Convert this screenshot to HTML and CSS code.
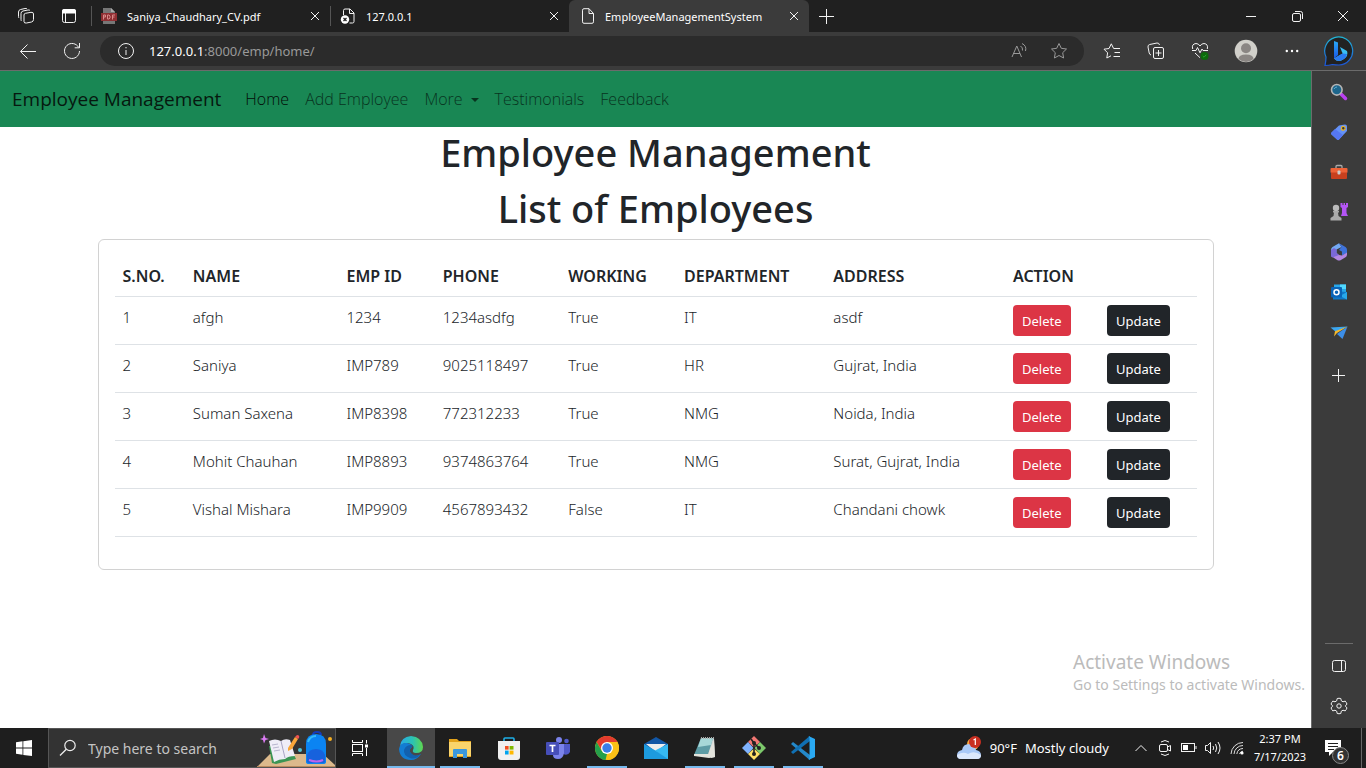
FILE: index.html
```html
<!DOCTYPE html>
<html lang="en">
<head>
<meta charset="utf-8">
<meta name="viewport" content="width=device-width, initial-scale=1">
<title>EmployeeManagementSystem</title>
<link rel="stylesheet" href="styles.css">
</head>
<body>
<div class="screen">

<header class="tabstrip">
  <button class="strip-btn" aria-label="Workspaces"><svg width="18" height="18" viewBox="0 0 18 18" class="line"><path d="M8.500 6.300L14 5.300Q16.500 5 16.500 7V12.500Q16.500 14.500 14.500 15L9.500 16Q7 16.500 7 14.500V8Q7 6.500 8.500 6.300ZM4.500 14Q4 13.500 4 12.500V6.500Q4 4.500 6 4L11 3Q12.500 2.800 13 3.500M2 11Q1.500 10.500 1.500 9.500V5Q1.500 3 3.500 2.500L8 1.500Q9.500 1.200 10 1.800"/></svg></button>
  <button class="strip-btn" aria-label="Tab actions"><svg width="16" height="16" viewBox="0 0 16 16"><rect x="1.500" y="1.500" width="13" height="13" rx="2" class="line"/><path d="M1 5.500V3Q1 1 3 1H13Q15 1 15 3V5.500Z" fill="#fff"/><path d="M4.500 5V14" class="line"/></svg></button>
  <div class="tab">
    <svg width="16" height="16" viewBox="0 0 16 16"><path d="M2 0H10L14 4V16H2Z" fill="#777"/><path d="M10 0V4H14Z" fill="#aaa"/><rect x="0" y="5" width="16" height="8" fill="#8f2f33"/><path d="M2.500 11.500V7H4.500V9H2.500M6.500 7V11H8L9 10V8L8 7ZM11.500 11.500V7H14M11.500 9H13.500" fill="none" stroke="#d98a8a"/></svg>
    <span class="tab-title">Saniya_Chaudhary_CV.pdf</span>
    <button class="close" aria-label="Close tab"><svg width="10" height="10" viewBox="0 0 10 10" class="line"><path d="M1 1L9 9M9 1L1 9"/></svg></button>
  </div>
  <div class="tab">
    <svg width="16" height="16" viewBox="0 0 16 16"><path d="M3.500 7V2.500Q3.500 1 5 1H10L14 5V13.500Q14 15 12.500 15H9.500M9.500 1V5.500H14" class="line"/><circle cx="5" cy="11.500" r="4.200" fill="#fff"/><path d="M3.500 10L6.500 13M6.500 10L3.500 13" stroke="#202020" stroke-width="1.200"/></svg>
    <span class="tab-title">127.0.0.1</span>
    <button class="close" aria-label="Close tab"><svg width="10" height="10" viewBox="0 0 10 10" class="line"><path d="M1 1L9 9M9 1L1 9"/></svg></button>
  </div>
  <div class="tab tab-active">
    <svg width="14" height="16" viewBox="0 0 14 16" class="line"><path d="M8 .700H3Q1.500 .700 1.500 2.200V13.800Q1.500 15.300 3 15.300H11Q12.500 15.300 12.500 13.800V5.500ZM8 .700V5.500H12.500"/></svg>
    <span class="tab-title">EmployeeManagementSystem</span>
    <button class="close" aria-label="Close tab"><svg width="10" height="10" viewBox="0 0 10 10" class="line"><path d="M1 1L9 9M9 1L1 9"/></svg></button>
  </div>
  <button class="new-tab" aria-label="New tab"><svg width="15" height="15" viewBox="0 0 15 15" class="line"><path d="M7.500 0V15M0 7.500H15"/></svg></button>
  <div class="window-controls">
    <button aria-label="Minimize"><svg width="10" height="10" viewBox="0 0 10 10" class="line"><path d="M0 5.500H10"/></svg></button>
    <button aria-label="Restore"><svg width="11" height="11" viewBox="0 0 11 11" class="line"><rect x=".500" y="2.500" width="8" height="8" rx="1.500"/><path d="M3 .500H8.500Q10.500 .500 10.500 2.500V8"/></svg></button>
    <button aria-label="Close window"><svg width="10" height="10" viewBox="0 0 10 10" class="line"><path d="M0 0L10 10M10 0L0 10"/></svg></button>
  </div>
</header>

<div class="toolbar">
  <button class="tool" aria-label="Back"><svg width="18" height="16" viewBox="0 0 18 16" class="line"><path d="M17 8.500H1.500M8.500 1.500L1.500 8.500L8.500 15.500"/></svg></button>
  <button class="tool" aria-label="Refresh"><svg width="18" height="18" viewBox="0 0 18 18" class="line"><path d="M16.500 9A7.500 7.500 0 1 1 14.800 4.200L16 5.500M16.500 1V5.800H11.700"/></svg></button>
  <div class="address">
    <svg width="18" height="18" viewBox="0 0 18 18" class="line"><circle cx="9" cy="9" r="7.500"/><path d="M9 8V13M9 5V6.300"/></svg>
    <label for="url" class="host">127.0.0.1</label><input id="url" class="url" type="text" value=":8000/emp/home/">
    <button class="pill-btn" aria-label="Read aloud"><svg width="18" height="18" viewBox="0 0 18 18" class="line dim"><path d="M2 15L6.800 4L11.500 15M3.500 11.500H10M10.500 4Q13 5.500 12.500 8.500M12 1.500Q17 4 15.500 9"/></svg></button>
    <button class="pill-btn" aria-label="Add to favorites"><svg width="18" height="18" viewBox="0 0 18 18" class="line dim"><path d="M9 1.500L11.300 6.300L16.500 7L12.700 10.700L13.600 16L9 13.500L4.400 16L5.300 10.700L1.500 7L6.700 6.300Z" stroke-linejoin="round"/></svg></button>
  </div>
  <button class="tool" aria-label="Favorites"><svg width="18" height="18" viewBox="0 0 18 18" class="line"><path d="M10.500 6.300L8.300 1.800L6 6.500L1 7.200L4.600 10.800L3.800 16L8 13.800M10.500 6.500H17M11.500 10.500H17M10.500 14.500H17" stroke-linejoin="round"/></svg></button>
  <button class="tool" aria-label="Collections"><svg width="18" height="18" viewBox="0 0 18 18" class="line"><path d="M4 13Q2.500 12.500 2.200 11L1 5Q.700 3 2.700 2.500L10 1Q12 .700 12.500 3M14 5.500H8Q6.500 5.500 6.500 7V15Q6.500 16.500 8 16.500H15Q16.500 16.500 16.500 15V7Q16.500 5.500 15 5.500ZM11.500 8V14M8.500 11H14.500"/></svg></button>
  <button class="tool" aria-label="Browser essentials"><svg width="18" height="18" viewBox="0 0 18 18"><path d="M1.700 7Q.300 2 5 1.500Q7.500 1.500 9 4Q10.500 1.500 13 1.500Q17.500 2 16.300 7M4 11L9 15.700M1 8.500H5L6.500 5.500L9 10.800L11 7L12 8.500H17" class="line"/><circle cx="13.500" cy="14" r="4" fill="#0b6a0b"/><path d="M11.800 14L13 15.200L15.200 12.800" fill="none" stroke="#2b9a30"/></svg></button>
  <button class="tool profile" aria-label="Profile"><svg width="24" height="24" viewBox="0 0 24 24"><circle cx="12" cy="12" r="11.300" fill="#d1d0ca"/><circle cx="12" cy="9.300" r="5" fill="#8a8683"/><path d="M4.500 20Q4.500 15.500 12 15.500T19.500 20Q12 26 4.500 20Z" fill="#8a8683"/></svg></button>
  <button class="tool" aria-label="Settings and more"><svg width="14" height="4" viewBox="0 0 14 4" fill="#fff"><circle cx="1.800" cy="2" r="1.200"/><circle cx="7" cy="2" r="1.200"/><circle cx="12.200" cy="2" r="1.200"/></svg></button>
  <button class="bing" aria-label="Discover"><svg width="32" height="32" viewBox="0 0 32 32"><defs><linearGradient id="ring" x1="0" y1="0" x2="0" y2="1"><stop stop-color="#20b5d6"/><stop offset="1" stop-color="#1c55d8"/></linearGradient><linearGradient id="bb" x1="0" y1="0" x2="0" y2="1"><stop stop-color="#2aa8f4"/><stop offset="1" stop-color="#1957e8"/></linearGradient></defs><path d="M2 30.500Q3 26 3 22A14 14 0 1 1 16 30Q12 30 9.500 29.500Q6 30.500 2 30.500Z" fill="#222" stroke="url(#ring)" stroke-width="1.200"/><path d="M11 6L15 7.500V20L11 23.500Z" fill="url(#bb)"/><path d="M17 12L24 16Q26 21 20 24.500Q15 28 11 23.500L19.500 18.500Z" fill="#39bff5"/><path d="M11 23.500L15 20L19.500 18.500L17 12L19 17L15 20" fill="#222"/><path d="M11 23.500L19.500 18.500L24 19Q23 24 18 25.500Q14 27 11 23.500Z" fill="#297af0"/></svg></button>
</div>

<div class="workspace">
  <main class="page">
    <nav class="navbar">
      <a class="brand" href="#">Employee Management</a>
      <a class="nav-link active" href="#">Home</a>
      <a class="nav-link" href="#">Add Employee</a>
      <a class="nav-link dropdown" href="#">More</a>
      <a class="nav-link" href="#">Testimonials</a>
      <a class="nav-link" href="#">Feedback</a>
    </nav>
    <h1>Employee Management</h1>
    <h1>List of Employees</h1>
    <section class="container">
      <div class="card">
        <table class="table">
          <colgroup><col class="c-no"><col class="c-name"><col class="c-id"><col class="c-phone"><col class="c-work"><col class="c-dept"><col class="c-addr"><col class="c-del"><col class="c-upd"></colgroup>
          <thead>
            <tr><th>S.NO.</th><th>NAME</th><th>EMP ID</th><th>PHONE</th><th>WORKING</th><th>DEPARTMENT</th><th>ADDRESS</th><th colspan="2">ACTION</th></tr>
          </thead>
          <tbody>
            <tr><td>1</td><td>afgh</td><td>1234</td><td>1234asdfg</td><td>True</td><td>IT</td><td>asdf</td><td><button class="btn danger">Delete</button></td><td><button class="btn dark">Update</button></td></tr>
            <tr><td>2</td><td>Saniya</td><td>IMP789</td><td>9025118497</td><td>True</td><td>HR</td><td>Gujrat, India</td><td><button class="btn danger">Delete</button></td><td><button class="btn dark">Update</button></td></tr>
            <tr><td>3</td><td>Suman Saxena</td><td>IMP8398</td><td>772312233</td><td>True</td><td>NMG</td><td>Noida, India</td><td><button class="btn danger">Delete</button></td><td><button class="btn dark">Update</button></td></tr>
            <tr><td>4</td><td>Mohit Chauhan</td><td>IMP8893</td><td>9374863764</td><td>True</td><td>NMG</td><td>Surat, Gujrat, India</td><td><button class="btn danger">Delete</button></td><td><button class="btn dark">Update</button></td></tr>
            <tr><td>5</td><td>Vishal Mishara</td><td>IMP9909</td><td>4567893432</td><td>False</td><td>IT</td><td>Chandani chowk</td><td><button class="btn danger">Delete</button></td><td><button class="btn dark">Update</button></td></tr>
          </tbody>
        </table>
      </div>
    </section>
    <div class="watermark"><p class="wm-title">Activate Windows</p><p class="wm-sub">Go to Settings to activate Windows.</p></div>
  </main>

  <aside class="sidebar">
    <button aria-label="Search"><svg width="18" height="18" viewBox="0 0 18 18"><path d="M11 11L15.500 15.500" stroke="#b940f0" stroke-width="3.500" stroke-linecap="round"/><circle cx="6.800" cy="6.800" r="5.300" fill="#1d668c" stroke="#b5b5b5" stroke-width="1.600"/><path d="M4 6Q5 4 7 4" stroke="#63b0d2" fill="none"/></svg></button>
    <button aria-label="Shopping"><svg width="18" height="18" viewBox="0 0 18 18"><path d="M9 2.500L15 1.500Q17 1.500 17 3.500V8L9 16.500Q8 17.500 7 16.500L1.500 11.500Q.500 10.500 1.500 9.500Z" fill="#6492f7"/><path d="M5 6L1.500 9.500Q.500 10.500 1.500 11.500L7 16.500Q8 17.500 9 16.500L13 12Z" fill="#5577f3"/><circle cx="13.300" cy="5.200" r="1.900" fill="#334" stroke="#e2b32c" stroke-width="1.300"/></svg></button>
    <button aria-label="Tools"><svg width="18" height="18" viewBox="0 0 18 18"><path d="M6 5V3.500Q6 2.500 7 2.500H11Q12 2.500 12 3.500V5" fill="none" stroke="#aaa" stroke-width="1.300"/><rect x=".500" y="5" width="17" height="5" rx="1" fill="#ee6338"/><path d="M1 9.500H17V15Q17 16 16 16H2Q1 16 1 15Z" fill="#c8401e"/><rect x="7.500" y="7.500" width="3" height="4" rx="1" fill="#ccc"/></svg></button>
    <button aria-label="Games"><svg width="18" height="18" viewBox="0 0 18 18"><path d="M10.500 0H12.500V2H13.500V0H15V2H16V0H18V4L16.500 5V10L18 13H11L12 10V5L10.500 4Z" fill="#b455f5"/><circle cx="6" cy="5" r="3.200" fill="#bbb"/><path d="M3 8H9V9.500H8L8.500 13L11.500 15V17.500H.500V15L3.500 13L4 9.500H3Z" fill="#aaa"/></svg></button>
    <button aria-label="Microsoft 365"><svg width="18" height="18" viewBox="0 0 18 18"><path d="M9 .300L2.500 4Q1 5 1 7V13L6.500 10V6.500L11.500 4Z" fill="#73a9f3"/><path d="M9 .300L15.500 4Q17 5 17 7V10L12 12.500V8.500L9 7L11.500 4Z" fill="#3f73dc"/><path d="M1 13L6.500 10L9 12L12 12.500L17 9.500V11.500Q17 13.500 15.500 14.300L10.500 17.200Q9 18 7.500 17.200Z" fill="#b487e2"/><path d="M1 7V13Q1.500 14 2.500 14.500L9 12L6.500 10V6.500L4 5Z" fill="#7b68d8"/></svg></button>
    <button aria-label="Outlook"><svg width="18" height="18" viewBox="0 0 18 18"><path d="M4 1.500H16V10H4Z" fill="#28a8ea"/><path d="M10 1.500H16V6H10Z" fill="#50d9ff"/><path d="M3 8L17 9V16.500H3Z" fill="#0f78c8"/><path d="M10 13L17 9V16.500Z" fill="#28a8ea"/><rect x="1" y="4" width="11" height="10.500" rx="1" fill="#0a64b8"/><circle cx="6.500" cy="9.200" r="2.500" fill="none" stroke="#fff" stroke-width="1.500"/></svg></button>
    <button aria-label="Drop"><svg width="18" height="18" viewBox="0 0 18 18"><path d="M.500 4.500L17.500 3.500L6 9Z" fill="#3ba7f0"/><path d="M17.500 3.500L12.500 16L7 11Z" fill="#3c8ee8"/><path d="M17.500 3.500L5 8.200L4 13.500L7 10Z" fill="#f6b92c"/></svg></button>
    <button class="add" aria-label="Add to sidebar"><svg width="13" height="13" viewBox="0 0 13 13" class="line"><path d="M6.500 0V13M0 6.500H13"/></svg></button>
    <div class="sidebar-foot">
      <button aria-label="Hide sidebar"><svg width="16" height="14" viewBox="0 0 16 14" class="line"><rect x="1.500" y="1.500" width="13" height="11" rx="2"/><path d="M10.500 1.500V12.500"/></svg></button>
      <button aria-label="Sidebar settings"><svg width="18" height="18" viewBox="0 0 18 18" class="line"><path d="M7.200 1.500Q9 1 10.800 1.500L11.300 3.800L13 4.800L15.200 4.100Q16.500 5.500 17 7.200L15.300 8.800V9.200L17 10.800Q16.500 12.500 15.200 13.900L13 13.200L11.300 14.200L10.800 16.500Q9 17 7.200 16.500L6.700 14.200L5 13.200L2.800 13.900Q1.500 12.500 1 10.800L2.700 9.200V8.800L1 7.200Q1.500 5.500 2.800 4.100L5 4.800L6.700 3.800Z" stroke-linejoin="round"/><circle cx="9" cy="9" r="2.200"/></svg></button>
    </div>
  </aside>
</div>

<footer class="taskbar">
  <button class="start" aria-label="Start"><svg width="16" height="16" viewBox="0 0 16 16" fill="#fff"><path d="M0 2.300L6.500 1.300V7.600H0ZM7.300 1.200L16 0V7.600H7.300ZM0 8.400H6.500V14.800L0 13.800ZM7.300 8.400H16V16L7.300 14.900Z"/></svg></button>
  <div class="search">
    <label for="search" class="search-icon"><svg width="18" height="18" viewBox="0 0 18 18"><circle cx="11" cy="6.500" r="5.200" fill="none" stroke="#eee" stroke-width="1.200"/><path d="M7.300 10.200L1 16.500" stroke="#eee" stroke-width="1.300"/></svg></label>
    <input id="search" type="text" placeholder="Type here to search" aria-label="Type here to search">
    <svg width="78" height="38" viewBox="0 0 78 38"><path d="M0 38L13 25H66L78 36V38Z" fill="#dcb98c"/><path d="M0 37H78V38H0Z" fill="#b9895d"/><path d="M7 5L8.500 9L12 10L8.500 11L7 14.500L6 11L3 10L6 9Z" fill="#dc7cf5"/><path d="M12 17L31 13L39 30L19 35L15 34Z" fill="#3b9554"/><path d="M12 12Q18 9 24 12Q28 9 33 11L38 27Q31 27 28 30Q22 30 17 33Z" fill="#efedf7"/><path d="M24 12L28 29" stroke="#a9a5c5"/><path d="M15 16L21 15M16 19L22 18M17 22L23 21" stroke="#b8b5ce"/><path d="M31 19L38 8L41 10L35 20L31 22Z" fill="#f9a63a"/><path d="M38 8L40 6Q43 6 42 9L41 10Z" fill="#ef5350"/><circle cx="43" cy="21" r="2" fill="#57c3d3"/><circle cx="73" cy="10" r="2" fill="#f7b021"/><path d="M56 6Q56 3 60 3T64 6" fill="none" stroke="#153bb8" stroke-width="2"/><path d="M49 33V15Q49 5 59 5T69 15V33Q69 35 66 35H52Q49 35 49 33Z" fill="#0b84f2"/><path d="M51 13Q53 7 59 7" fill="none" stroke="#35bdf7" stroke-width="2"/><path d="M50 26Q52 20 59 20T68 26V32Q68 34 65 34H53Q50 34 50 32Z" fill="#1762dd"/><path d="M52 31Q60 34 66 31" fill="none" stroke="#bd65ed" stroke-width="2"/></svg>
  </div>
  <button class="task view" aria-label="Task view"><svg width="18" height="16" viewBox="0 0 18 16" fill="none" stroke="#fff"><path d="M1.500 0V2.500H11.500V0M1.500 16V13.500H11.500V16M15.500 0V3.500M15.500 8V16"/><rect x="1.500" y="4.500" width="10" height="7"/><rect x="14" y="4.500" width="3" height="3" fill="#fff" stroke="none"/></svg></button>
  <div class="apps">
    <button class="task open current" aria-label="Edge"><svg width="24" height="24" viewBox="0 0 24 24"><defs><linearGradient id="eg"><stop stop-color="#28a9e8"/><stop offset=".550" stop-color="#2bc3b4"/><stop offset="1" stop-color="#5fd84e"/></linearGradient></defs><path d="M1 10Q2 1 12 0Q23 1 24 11Q24 17 17 17Q13 17 14 14Q16 10 12 8Q6 5 1 10Z" fill="url(#eg)"/><path d="M0 13Q1 6 8 7Q13 8 13 11Q9 14 12 18Q16 22 22 18Q18 24 12 24Q1 24 0 13Z" fill="#137dd3"/><path d="M8 10Q12 8 14 10Q8 14 13 18Q17 21 22 18Q17 24 11 22Q4 19 5 14Q6 11 8 10Z" fill="#1261ae"/></svg></button>
    <button class="task open" aria-label="File Explorer"><svg width="24" height="24" viewBox="0 0 24 24"><path d="M1 3H9L11 5H23V21H1Z" fill="#e3a21a"/><path d="M1 6H23V20H1Z" fill="#fad46b"/><path d="M5 22V14Q5 13 6 13H18Q19 13 19 14V22H15V18H9V22Z" fill="#3a97dc"/></svg></button>
    <button class="task" aria-label="Microsoft Store"><svg width="24" height="24" viewBox="0 0 24 24"><path d="M7 6V3Q7 2 8 2H16Q17 2 17 3V6" fill="none" stroke="#1eb0e8" stroke-width="1.600"/><path d="M1 5H23V21Q23 24 20 24H4Q1 24 1 21Z" fill="#f1f1f1"/><path d="M8 10H11.600V13.600H8Z" fill="#f25022"/><path d="M12.600 10H16.500V13.600H12.600Z" fill="#7fba00"/><path d="M8 14.600H11.600V18.500H8Z" fill="#00a4ef"/><path d="M12.600 14.600H16.500V18.500H12.600Z" fill="#ffb900"/></svg></button>
    <button class="task" aria-label="Teams"><svg width="24" height="24" viewBox="0 0 24 24"><circle cx="13" cy="4" r="3" fill="#7b83eb"/><circle cx="20.500" cy="5" r="2.300" fill="#5059c9"/><path d="M17 8H24V16Q22 20 17 18Z" fill="#5059c9"/><path d="M7 8H18V17Q17 23 12 23T7 19Z" fill="#7b83eb"/><rect y="6" width="13" height="13" rx="1" fill="#464eb8"/><path d="M3.500 9.500H9.500M6.500 9.500V16" stroke="#fff" stroke-width="1.700"/></svg></button>
    <button class="task open" aria-label="Chrome"><svg width="24" height="24" viewBox="0 0 24 24"><circle cx="12" cy="12" r="12" fill="#fbc116"/><path d="M1.600 6A12 12 0 0 1 22.400 6H12L7 15Z" fill="#e33b2e"/><path d="M1.600 6L6.800 15L12 18L10.500 24A12 12 0 0 1 1.600 6Z" fill="#25a04b"/><path d="M12 6H22.400A12 12 0 0 1 12 24L17.200 15Z" fill="#fbc116"/><circle cx="12" cy="12" r="6" fill="#fff"/><circle cx="12" cy="12" r="4.700" fill="#397ee9"/></svg></button>
    <button class="task" aria-label="Mail"><svg width="24" height="24" viewBox="0 0 24 24"><path d="M0 8L12 1L24 8V20H0Z" fill="#1257a6"/><path d="M2 8H22L12 16Z" fill="#eee"/><path d="M0 8L14 16L24 22V23H0Z" fill="#1d9bdf"/><path d="M24 8V23L11 14.500Z" fill="#36b9f1"/></svg></button>
    <button class="task open" aria-label="Notepad"><svg width="24" height="24" viewBox="0 0 24 24"><path d="M8 2H21L22 21L18 22Z" fill="#d3d7d7"/><path d="M8 2H20L15 19H1Z" fill="#5d9ca5"/><path d="M8 2H20L18 9L5 11Z" fill="#a7d8d8"/><path d="M1 18H15L21 4L22 21L16 22L1 20Z" fill="#e3e3dc"/><path d="M8 2H21" stroke="#aaa" stroke-width="2" stroke-dasharray="1 1"/></svg></button>
    <button class="task open" aria-label="Git Bash"><svg width="24" height="24" viewBox="0 0 24 24"><path d="M12 0L18 6L12 11.500L6 6Z" fill="#f27773"/><path d="M6 6L11.500 12L6 18L0 12Z" fill="#80b3ff"/><path d="M18 6L24 12L18 18L12.500 12Z" fill="#7cc86b"/><path d="M12 12.500L18 18L12 24L6 18Z" fill="#ffe067"/><path d="M9 3L12 7V18M12 7L17 12" fill="none" stroke="#222" stroke-width="1.600"/><circle cx="12" cy="7" r="2" fill="#222"/><circle cx="12" cy="18" r="2" fill="#222"/><circle cx="17" cy="12" r="2" fill="#222"/></svg></button>
    <button class="task open" aria-label="Visual Studio Code"><svg width="24" height="24" viewBox="0 0 24 24"><path d="M0 8L2 6L19 19V24L17.500 23Z" fill="#2489ca"/><path d="M0 16L2 18L19 5V0L17.500 1Z" fill="#1070b3"/><path d="M17.500 0L24 3V21L17.500 24L18.500 22V2Z" fill="#2aa9f2"/></svg></button>
  </div>
  <div class="tray">
    <button class="weather"><svg width="26" height="26" viewBox="0 0 26 26"><circle cx="17" cy="9" r="6" fill="#f7a53b"/><path d="M5 24Q1 24 1 20T6 15Q7 9 13 9T20 15Q25 16 25 20T21 24Z" fill="#a9c9f7"/><path d="M5 24Q1 24 1 20Q7 16 12 19Q18 15 25 20Q25 24 21 24Z" fill="#dbe8fc"/><circle cx="19" cy="7" r="6" fill="#c92f22"/><path d="M17.500 5L19.300 4V10" fill="none" stroke="#fff" stroke-width="1.200"/></svg><span>90°F</span><span>Mostly cloudy</span></button>
    <button class="tray-btn" aria-label="Show hidden icons"><svg width="14" height="8" viewBox="0 0 14 8" class="line"><path d="M1.500 7L7 1.500L12.500 7"/></svg></button>
    <button class="tray-btn" aria-label="Meet now"><svg width="14" height="18" viewBox="0 0 14 18" class="line"><path d="M3 3Q7 0 11 3M3 15Q7 18 11 15"/><rect x="1.500" y="5.500" width="8" height="7" rx="1.500"/><path d="M9.500 8L12.500 6.500V12L9.500 10.500"/></svg></button>
    <button class="tray-btn" aria-label="Battery"><svg width="16" height="10" viewBox="0 0 16 10"><rect x=".500" y=".500" width="13" height="8" class="line"/><rect x="2" y="2" width="5" height="5" fill="#fff"/><path d="M15 3V6" class="line"/></svg></button>
    <button class="tray-btn" aria-label="Volume"><svg width="18" height="14" viewBox="0 0 18 14" class="line"><path d="M1.500 4.500H3.500L6.500 1.500V12.500L3.500 9.500H1.500ZM9 5Q10.500 7 9 9M11.500 3Q14 7 11.500 11M14 1Q18 7 14 13"/></svg></button>
    <button class="tray-btn" aria-label="Network"><svg width="14" height="14" viewBox="0 0 14 14"><path d="M1 13A12 12 0 0 1 13 1.500M4 13A9 9 0 0 1 13 4.500M6.800 13A6.500 6.500 0 0 1 13 7.500M9.500 13A4 4 0 0 1 13 10.200" fill="none" stroke="#ddd"/><circle cx="12" cy="12" r="1.600" fill="#fff"/></svg></button>
    <button class="clock"><span>2:37 PM</span><span>7/17/2023</span></button>
    <button class="notice" aria-label="6 notifications"><svg width="18" height="18" viewBox="0 0 18 18"><path d="M1 1H17V13H9L5 17V13H1Z" fill="#fff"/><path d="M4 4.500H14M4 7.500H14M4 10.500H10" stroke="#202020"/></svg><span class="badge">6</span></button>
  </div>
</footer>
</div>
</body>
</html>
```
FILE: styles.css
```css
* { box-sizing: border-box; }
body { margin: 0; font-family: "Noto Sans", "Open Sans", sans-serif; color: #212529; background: #fff; }
button { display: flex; align-items: center; justify-content: center; margin: 0; padding: 0; border: 0; background: none; color: inherit; font: inherit; }
input { margin: 0; padding: 0; border: 0; background: none; color: inherit; font: inherit; outline: 0; min-width: 0; }
a { text-decoration: none; color: inherit; }
p { margin: 0; }
svg { flex: none; display: block; }
.line { fill: none; stroke: #f2f2f2; stroke-width: 1; }
.dim { stroke: #999; }
.screen { display: flex; flex-direction: column; min-height: 100vh; }

/* Browser tab strip */
.tabstrip { display: flex; height: 32px; background: #202020; color: #fff; font-size: 11px; padding-left: 5px; }
.strip-btn { width: 43px; padding-right: 2px; }
.tab { display: flex; align-items: center; width: 239px; padding: 0 10px; gap: 10px; background: linear-gradient(#555, #555) left center / 1px 20px no-repeat; white-space: nowrap; }
.tab-active { width: 240px; padding-left: 12px; background: #3b3b3b; border-radius: 6px 6px 0 0; }
.tab-title { flex: 1; }
.close { width: 10px; height: 16px; }
.new-tab { width: 34px; }
.window-controls { display: flex; margin-left: auto; }
.window-controls button { width: 46px; }

/* Browser toolbar */
.toolbar { display: flex; align-items: center; height: 39px; padding-left: 6px; background: #3b3b3b; border-bottom: 1px solid #6b6b6b; }
.tool { width: 44px; height: 36px; }
.profile { width: 48px; }
.bing { width: 52px; padding-right: 2px; }
.address { flex: 1; display: flex; align-items: center; height: 30px; margin: 0 6px; padding: 0 5px 0 17px; border-radius: 15px; background: #2b2b2b; font-size: 13px; }
.host { color: #fff; padding-left: 14px; }
.url { flex: 1; color: #999; }
.pill-btn { width: 40px; height: 30px; }

/* Page */
.workspace { flex: 1; display: flex; }
.page { flex: 1; position: relative; min-width: 0; }
.navbar { display: flex; align-items: center; height: 56px; padding: 0 12px; background: #198754; font-family: "Open Sans", "Noto Sans", sans-serif; font-size: 16px; font-weight: 300; white-space: nowrap; }
.brand { margin-right: 16px; font-size: 19px; font-weight: 400; color: #06180f; }
.nav-link { padding: 8px; color: #08341f; }
.nav-link.active { color: #020c07; }
.dropdown::after { content: ""; display: inline-block; margin-left: 8px; vertical-align: 3px; border-top: 4px solid; border-right: 4px solid transparent; border-left: 4px solid transparent; }
h1 { margin: 0 0 6px; font-size: 38px; font-weight: 500; line-height: 50px; text-align: center; }
.container { max-width: 1140px; margin: 0 auto; padding: 0 12px; }
.card { padding: 16px; border: 1px solid #d2d2d2; border-radius: 6px; }
.table { width: 100%; margin-bottom: 16px; border-collapse: collapse; table-layout: fixed; font-size: 15px; line-height: 24px; text-align: left; font-weight: 350; white-space: nowrap; }
.table th, .table td { padding: 8px; vertical-align: top; border-bottom: 1px solid #dee2e6; }
.table th { font-size: 16px; font-weight: 600; }
.c-no { width: 6.5%; }
.c-name { width: 14.2%; }
.c-id { width: 8.9%; }
.c-phone { width: 11.6%; }
.c-work { width: 10.7%; }
.c-dept { width: 13.8%; }
.c-addr { width: 16.6%; }
.c-del { width: 8.7%; }
.c-upd { width: 9%; }
.btn { height: 31px; padding: 0 9px; border-radius: 4px; color: #fff; font-size: 13px; font-weight: 400; }
.danger { background: #dc3545; }
.dark { background: #212529; }
.watermark { position: absolute; right: 2px; bottom: 33px; min-width: 236px; color: #bbb; }
.wm-title { font-size: 19px; line-height: 26px; }
.wm-sub { font-size: 14px; line-height: 20px; }

/* Browser sidebar */
.sidebar { display: flex; flex-direction: column; width: 55px; padding-left: 3px; padding-top: 1px; border-left: 1px solid #6b6b6b; background: #3b3b3b; }
.sidebar button { width: 48px; height: 40px; }
.sidebar .add { width: 46px; height: 46px; }
.sidebar-foot { margin-top: auto; padding-bottom: 2px; }
.sidebar-foot::before { content: ""; display: block; width: 28px; height: 1px; margin: 0 0 2px 10px; background: #6b6b6b; }

/* Taskbar */
.taskbar { display: flex; height: 40px; background: #1e1e1e; color: #fff; }
.start { width: 48px; }
.search { display: flex; align-items: center; width: 288px; background: #333; border: 1px solid #555; font-size: 14px; }
.search-icon { padding: 0 11px 0 10px; }
.search input { flex: 1; color: #ccc; }
.search input::placeholder { color: #c4c4c4; opacity: 1; }
.task { width: 48px; height: 40px; }
.apps { display: flex; gap: 1px; margin-left: 3px; }
.open { background: linear-gradient(#76b9ed, #76b9ed) center bottom / 40px 2px no-repeat; }
.current { background: linear-gradient(#76b9ed, #76b9ed) center bottom / 48px 2px no-repeat #484848; }
.tray { display: flex; margin-left: auto; margin-right: 4px; border-right: 1px solid #666; white-space: nowrap; }
.weather { gap: 8px; padding: 0 20px 0 8px; font-size: 13px; }
.tray-btn { width: 24px; }
.clock { flex-direction: column; width: 62px; font-size: 11px; line-height: 18px; }
.notice { position: relative; width: 50px; padding-right: 6px; }
.badge { position: absolute; right: 12px; bottom: 4px; width: 17px; height: 17px; border: 1px solid #888; border-radius: 50%; background: #333; font-size: 12px; font-weight: 600; line-height: 15px; }
```
